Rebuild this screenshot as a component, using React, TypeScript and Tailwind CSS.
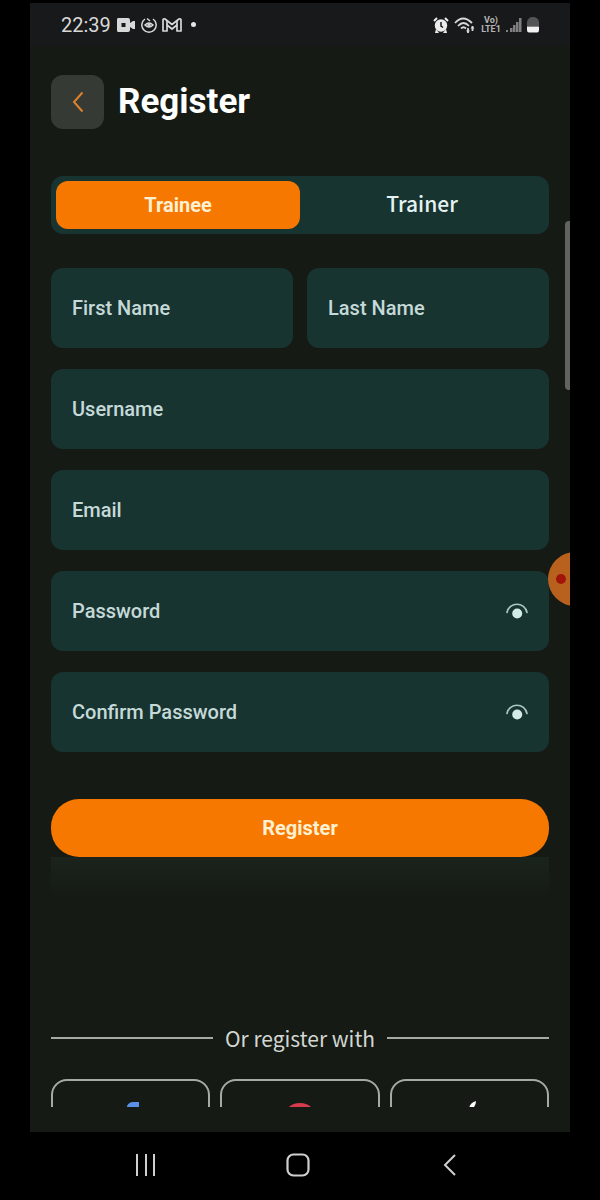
import { useState } from "react";
import type { ReactNode } from "react";

function StatusBar() {
  return (
    <header className="flex h-[43px] items-center justify-between bg-[#18191a] pl-[31px] pr-[31px] text-[#d8d8d8]">
      <div className="flex items-center gap-[5px]">
        <span className="text-[20px] leading-6">22:39</span>
        <svg className="h-4 w-5" viewBox="0 0 20 16" fill="currentColor" aria-hidden="true">
          <path fillRule="evenodd" d="M2 1h10q2 0 2 2v3l3-2h2v8h-2l-3-2v3q0 2-2 2H2q-1 0-1-2V3q0-2 1-2zm3.500 5v4h4V6z" />
        </svg>
        <svg className="h-4 w-4" viewBox="0 0 16 16" fill="none" stroke="currentColor" strokeWidth="1.500" aria-hidden="true">
          <path d="M4 2a7.200 7.200 0 1 0 8 0" />
          <path d="M6 1.500 9 4M4 8Q8 4 12 8 8 12 4 8z" />
          <circle cx="8" cy="8" r="1" />
        </svg>
        <svg className="h-4 w-5" viewBox="0 0 20 16" fill="none" stroke="currentColor" strokeWidth="1.700" strokeLinejoin="round" aria-hidden="true">
          <path d="M1 14V3q0-1.500 2-1l7 5.500L17 2q2-.5 2 1v11h-4V8l-5 4-5-4v6z" />
          <path d="M5 8V4M15 8V4" />
        </svg>
        <span className="ml-1 size-[5px] rounded-full bg-[#e6e6e6]" />
      </div>
      <div className="flex items-center gap-[5px]">
        <svg className="h-4 w-4" viewBox="0 0 16 16" aria-hidden="true">
          <g fill="#ececec">
            <circle cx="8" cy="8.500" r="6.200" />
            <path d="M3 12l-1 4h4zM13 12l1 4h-4z" />
          </g>
          <path d="M1 4l3-3M15 4l-3-3" stroke="#ececec" strokeWidth="2" />
          <path d="M8 5v4l2 1.500" stroke="#18191a" strokeWidth="1.500" fill="none" />
        </svg>
        <svg className="h-[18px] w-[22px]" viewBox="0 0 22 18" fill="none" stroke="currentColor" strokeWidth="1.800" aria-hidden="true">
          <path d="M1 7q8-9 17 0M4 10q5.500-6 11 0M7 12.500q2.500-2.500 5 0" />
          <path d="M14 17v-5M18.500 10v5" />
          <path d="M12 14.500h4L14 17zM16.500 12.500h4l-2-2.500z" fill="currentColor" stroke="none" />
        </svg>
        <span className="w-5 text-center text-[9px] font-bold leading-[9px] text-[#b4b4b4]">
          Vo)
          <br />
          LTE1
        </span>
        <svg className="h-4 w-4" viewBox="0 0 16 16" fill="#808080" aria-hidden="true">
          <path d="M0 13h2v2H0zM4 11h2.500v4H4zM7 8h2.500v7H7zM10 5h2.500v10H10zM13 1h2.500v14H13z" />
        </svg>
        <svg className="h-4 w-3" viewBox="0 0 12 16" aria-hidden="true">
          <path d="M0 9V5Q1 0 6 0t6 5v4z" fill="#555" />
          <path d="M0 9.500h12V13q0 2.500-2 2.500H2Q0 15.500 0 13z" fill="#f2f2f2" />
        </svg>
      </div>
    </header>
  );
}

const fieldStyle =
  "block h-20 w-full min-w-0 rounded-xl bg-[#183431] px-[21px] text-[20px] font-medium text-[#c5dad8] placeholder:text-[#c5dad8] placeholder:opacity-100 outline-none";

function Field({ label, name, type = "text" }: { label: string; name: string; type?: string }) {
  return <input className={fieldStyle} aria-label={label} placeholder={label} name={name} type={type} />;
}

function PasswordField({ label, name }: { label: string; name: string }) {
  const [shown, setShown] = useState(false);
  return (
    <div className="relative">
      <Field label={label} name={name} type={shown ? "text" : "password"} />
      <button
        type="button"
        aria-label={`Show ${label.toLowerCase()}`}
        onClick={() => setShown(!shown)}
        className="absolute inset-y-0 right-5 flex items-center"
      >
        <svg className="h-6 w-6" viewBox="0 0 24 24" aria-hidden="true">
          <path d="M2 13.500C4 2.500 20 2.500 22 13.500" fill="none" stroke="#a9c6c2" strokeWidth="1.700" strokeLinecap="round" />
          <circle cx="12.200" cy="14.500" r="5" fill="#d3eae7" />
        </svg>
      </button>
    </div>
  );
}

function SocialButton({ label, children }: { label: string; children: ReactNode }) {
  return (
    <button
      type="button"
      aria-label={label}
      className="flex h-20 flex-1 justify-center rounded-2xl border-2 border-[#a5aba4] pt-5"
    >
      {children}
    </button>
  );
}

export default function App() {
  const [role, setRole] = useState("Trainee");
  return (
    <div className="min-h-screen bg-black pt-[3px] font-[Roboto,sans-serif]">
      <div className="relative mx-[30px] overflow-hidden bg-[#151a14]">
        <StatusBar />
        <main className="px-[21px] pb-[25px] pt-[29px]">
          <div className="flex items-center gap-[14px]">
            <button type="button" aria-label="Back" className="flex h-[54px] w-[53px] items-center justify-center rounded-xl bg-[#353a35]">
              <svg className="h-6 w-4" viewBox="0 0 16 24" fill="none" stroke="#e1802c" strokeWidth="2" aria-hidden="true">
                <path d="M12.500 2.500 4 12l8.500 9.500" />
              </svg>
            </button>
            <h1 className="text-[35px] font-bold leading-10 text-white">Register</h1>
          </div>

          <div className="mt-[47px] flex h-[58px] rounded-xl bg-[#183431] p-[5px]">
            {["Trainee", "Trainer"].map((item) => (
              <button
                key={item}
                type="button"
                aria-pressed={role === item}
                onClick={() => setRole(item)}
                className={
                  role === item
                    ? "flex-1 rounded-xl bg-[#f67800] text-[20px] font-bold text-[#fff0d2]"
                    : "flex-1 rounded-xl pb-1 font-['Noto_Sans_CJK_SC',sans-serif] text-[21px] font-medium leading-6 text-[#e4f3f1]"
                }
              >
                {item}
              </button>
            ))}
          </div>

          <form className="mt-[34px]" onSubmit={(event) => event.preventDefault()}>
            <div className="flex flex-col gap-[21px]">
              <div className="grid grid-cols-2 gap-[14px]">
                <Field label="First Name" name="firstName" />
                <Field label="Last Name" name="lastName" />
              </div>
              <Field label="Username" name="username" />
              <Field label="Email" name="email" type="email" />
              <PasswordField label="Password" name="password" />
              <PasswordField label="Confirm Password" name="confirmPassword" />
            </div>
            <button type="submit" className="mt-[47px] h-[58px] w-full rounded-[28px] bg-[#f67800] text-[20px] font-bold text-[#fff0d2]">
              Register
            </button>
          </form>
          <div className="h-10 bg-linear-to-b from-[#1b231d] to-[#151a14]" />

          <div className="mt-[126px] flex items-center gap-3 font-['Noto_Sans_CJK_SC',sans-serif] text-[21px] leading-[30px] text-[#d3d7d1]">
            <span className="h-[2px] flex-1 bg-[#a5aba4]" />
            <span>Or register with</span>
            <span className="h-[2px] flex-1 bg-[#a5aba4]" />
          </div>

          <div className="mt-[26px] flex h-7 gap-[10px] overflow-hidden">
            <SocialButton label="Facebook">
              <svg className="h-9 w-9" viewBox="0 0 36 36" fill="#5a91e6" aria-hidden="true">
                <path d="M26 1h-6q-4 0-6 4v8H9v6h5v15h6V19h5l1-6h-6V9q0-3 3-3h3z" />
              </svg>
            </SocialButton>
            <SocialButton label="Google">
              <svg className="h-9 w-9" viewBox="0 0 36 36" fill="none" strokeWidth="6" aria-hidden="true">
                <path d="M6 13Q9 5 18 5q6 0 10 4" stroke="#d63a4d" />
                <path d="M6 13q-2 5 0 10" stroke="#f4b400" />
                <path d="M6 23q3 8 12 8 6 0 10-4" stroke="#34a853" />
                <path d="M18 18h13q0 6-3 9" stroke="#4285f4" />
              </svg>
            </SocialButton>
            <SocialButton label="Apple">
              <svg className="h-9 w-9" viewBox="0 0 36 36" fill="#fff" aria-hidden="true">
                <path d="M25 0q0 7-7 9 0-7 7-9zM27 19q0-5 4-7-3-4-8-3-4 2-8 0C8 8 4 13 6 21q3 12 8 13 4-2 8 0 6 1 9-9-4-2-4-6z" />
              </svg>
            </SocialButton>
          </div>
        </main>

        <div className="absolute right-0 top-[218px] h-[169px] w-[5px] rounded-l-sm bg-[#60635e]" />
        <div className="absolute -right-8 top-[549px] flex size-[54px] items-center rounded-full bg-[#b8611f] pl-2">
          <span className="size-[10px] rounded-full bg-[#a31408]" />
        </div>
      </div>

      <nav className="mx-[30px] flex h-[66px] items-center justify-around pl-10 pr-11 text-[#cfcfcf]">
        <button type="button" aria-label="Recent apps">
          <svg className="h-6 w-6" viewBox="0 0 24 24" stroke="currentColor" strokeWidth="2" aria-hidden="true">
            <path d="M3 1v22M12 1v22M20 1v22" />
          </svg>
        </button>
        <button type="button" aria-label="Home">
          <svg className="h-6 w-6" viewBox="0 0 24 24" fill="none" stroke="currentColor" strokeWidth="2.200" aria-hidden="true">
            <rect x="1.500" y="1.500" width="21" height="21" rx="6" />
          </svg>
        </button>
        <button type="button" aria-label="Go back">
          <svg className="h-6 w-6" viewBox="0 0 24 24" fill="none" stroke="currentColor" strokeWidth="2" aria-hidden="true">
            <path d="M17 2 7 12l10 10" />
          </svg>
        </button>
      </nav>
    </div>
  );
}
